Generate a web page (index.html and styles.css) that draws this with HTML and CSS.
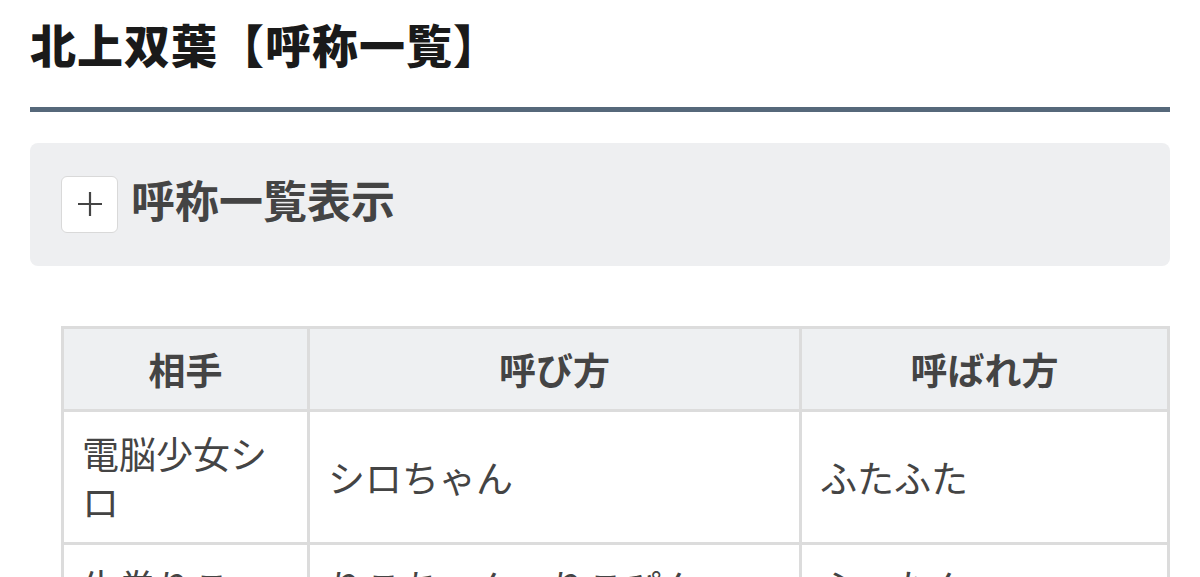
FILE: index.html
```html
<!DOCTYPE html>
<html lang="ja">
<head>
<meta charset="utf-8">
<link rel="stylesheet" href="styles.css">
</head>
<body>
<main class="page">
  <h1 class="title">北上双葉【呼称一覧】</h1>
  <div class="toggle">
    <span class="plus-btn">
      <svg width="30" height="30" viewBox="0 0 30 30"><path d="M15 3 V27 M3 15 H27" stroke="#444" stroke-width="2.2" fill="none"/></svg>
    </span>
    <span class="toggle-label">呼称一覧表示</span>
  </div>
  <table class="names">
    <colgroup>
      <col class="c1"><col class="c2"><col class="c3">
    </colgroup>
    <thead>
      <tr><th>相手</th><th>呼び方</th><th>呼ばれ方</th></tr>
    </thead>
    <tbody>
      <tr><td>電脳少女シロ</td><td>シロちゃん</td><td>ふたふた</td></tr>
      <tr><td>牛巻りこ</td><td>りこちゃん、りこぴん</td><td>ふーたん</td></tr>
    </tbody>
  </table>
</main>
</body>
</html>
```
FILE: styles.css
```css
html, body {
  margin: 0;
  padding: 0;
  background: #fff;
}
body {
  font-family: "Noto Sans CJK JP", "Noto Sans", sans-serif;
  color: #444;
}
.page {
  padding: 0 30px;
}
.title {
  margin: 0;
  padding-top: 20px;
  padding-bottom: 41px;
  font-size: 46px;
  line-height: 46px;
  letter-spacing: 1px;
  font-weight: 900;
  color: #1a1a1a;
  border-bottom: 5px solid #56687a;
}
.toggle {
  margin-top: 31px;
  background: #eeeff1;
  border-radius: 8px;
  padding: 32px 31px 33px;
  display: flex;
  align-items: center;
  gap: 13px;
}
.plus-btn {
  width: 55px;
  height: 55px;
  background: #fff;
  border: 1px solid #d9d9d9;
  border-radius: 6px;
  display: flex;
  align-items: center;
  justify-content: center;
}
.toggle-label {
  font-size: 44px;
  line-height: 48px;
  padding-bottom: 10px;
  font-weight: 700;
  color: #444;
}
.names {
  margin-top: 60px;
  margin-left: 31px;
  width: calc(100% - 31px);
  border-collapse: collapse;
  table-layout: fixed;
  font-size: 37px;
  line-height: 48px;
}
.c1 { width: 246px; }
.c2 { width: 492px; }
.names th, .names td {
  border: 3px solid #dcdcdc;
  vertical-align: middle;
}
.names th {
  padding: 16px 18px;
  background: #eef0f2;
  font-weight: 700;
  text-align: center;
  color: #444;
}
.names td {
  padding: 17px 18px;
  text-align: left;
  color: #444;
}
```
